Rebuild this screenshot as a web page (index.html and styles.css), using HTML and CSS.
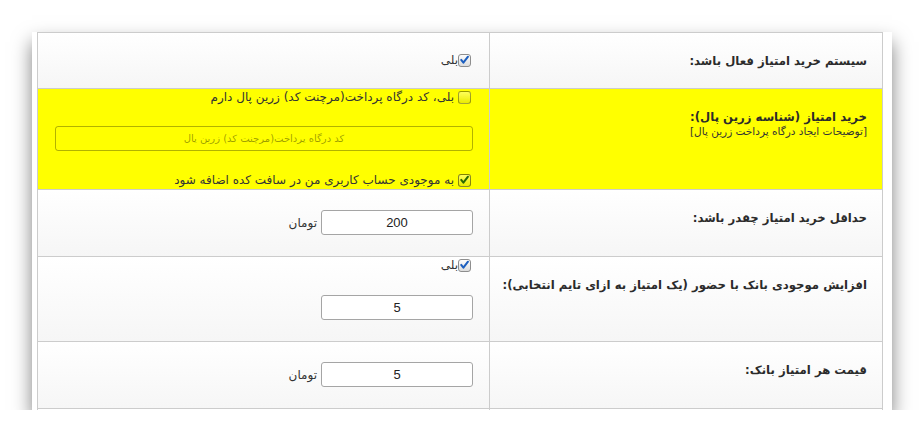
FILE: index.html
```html
<!DOCTYPE html>
<html lang="fa">
<head>
  <meta charset="utf-8">
  <title>تنظیمات خرید امتیاز</title>
  <link rel="stylesheet" href="styles.css">
</head>
<body>
  <div class="panel">
    <div class="settings" dir="rtl">

      <div class="row">
        <div class="label"><b>سیستم خرید امتیاز فعال باشد:</b></div>
        <div class="value value-top">
          <label class="check">
            <span class="box"><svg viewBox="0 0 13 13"><path d="M2.6 6.4 L5.2 9.6 L10.6 2.6"/></svg></span>بلی
          </label>
        </div>
      </div>

      <div class="row row-yellow">
        <div class="label">
          <b>خرید امتیاز (شناسه زرین پال):</b>
          <small>[توضیحات ایجاد درگاه پرداخت زرین پال]</small>
        </div>
        <div class="value value-top value-stack">
          <label class="check check-gap">
            <span class="box box-empty"></span>بلی، کد درگاه پرداخت(مرچنت کد) زرین پال دارم
          </label>
          <input class="field field-wide" type="text" placeholder="کد درگاه پرداخت(مرچنت کد) زرین پال">
          <label class="check check-gap">
            <span class="box box-green"><svg viewBox="0 0 13 13"><path d="M2.6 6.4 L5.2 9.6 L10.6 2.6"/></svg></span>به موجودی حساب کاربری من در سافت کده اضافه شود
          </label>
        </div>
      </div>

      <div class="row">
        <div class="label"><b>حداقل خرید امتیاز چقدر باشد:</b></div>
        <div class="value value-inline">
          <input class="field" type="text" value="200">
          <span class="unit">تومان</span>
        </div>
      </div>

      <div class="row">
        <div class="label"><b>افزایش موجودی بانک با حضور (یک امتیاز به ازای تایم انتخابی):</b></div>
        <div class="value value-top value-stack value-tail">
          <label class="check">
            <span class="box"><svg viewBox="0 0 13 13"><path d="M2.6 6.4 L5.2 9.6 L10.6 2.6"/></svg></span>بلی
          </label>
          <input class="field" type="text" value="5">
        </div>
      </div>

      <div class="row">
        <div class="label"><b>قیمت هر امتیاز بانک:</b></div>
        <div class="value value-inline">
          <input class="field" type="text" value="5">
          <span class="unit">تومان</span>
        </div>
      </div>

      <!-- next row, only its top edge shows inside the panel -->
      <div class="row">
        <div class="label"></div>
        <div class="value value-top">
          <span class="box"></span>
        </div>
      </div>

    </div>
  </div>
</body>
</html>
```

FILE: styles.css
```css
body { margin: 0; background: #fff; font-family: "DejaVu Sans", sans-serif; color: #333; }

.panel { margin: 32px 0 0 32px; width: 860px; height: 378px; box-sizing: border-box; padding: 0 9px 0 5px; background: #fff; overflow: hidden; box-shadow: 0 10px 18px rgba(0, 0, 0, 0.5); }

.settings { width: 846px; box-sizing: border-box; border: 1px solid #ccc; border-bottom: none; }

.row { display: grid; grid-template-columns: 393px 451px; border-bottom: 1px solid #ccc; background: linear-gradient(#fff, #f6f6f6); }
.row-yellow { background: #ffff00; }

.label { padding: 20px 15px 19px 6px; border-left: 1px solid #ccc; text-align: right; }
.label b { display: block; font-size: 11.7px; line-height: 16px; color: #2b2b2b; white-space: nowrap; }
.label small { display: block; font-size: 10.5px; line-height: 13px; color: #333; }

.value { padding: 20px 16px 21px; display: flex; }
.value-top { padding-top: 1px; padding-bottom: 2px; }
.value-stack { flex-direction: column; align-items: flex-start; gap: 22px; }
.value-tail { gap: 23px; padding-bottom: 21px; }
.value-inline { align-items: center; gap: 4px; }

.check { display: flex; align-items: center; font-size: 12px; line-height: 14px; color: #333; }
.check-gap { gap: 4px; }

.box { width: 13px; height: 13px; box-sizing: border-box; margin: 0 2px 0 0; border: 1px solid #8e8e8e; border-radius: 3px; background: linear-gradient(#fdfdfd, #dcdcdc); display: flex; align-items: center; justify-content: center; }
.box svg { width: 12px; height: 12px; }
.box path { fill: none; stroke: #1d5fbf; stroke-width: 2.4; stroke-linecap: round; stroke-linejoin: round; }
.box-empty { border-color: rgba(0, 0, 0, 0.35); background: linear-gradient(rgba(255, 255, 255, 0.35), rgba(0, 0, 0, 0.08)); }
.box-green { border-color: rgba(0, 0, 0, 0.45); background: linear-gradient(rgba(255, 255, 255, 0.35), rgba(0, 0, 0, 0.08)); }
.box-green path { stroke: #2c6a00; }

.field { width: 152px; height: 25px; box-sizing: border-box; margin: 0; padding: 0 6px; border: 1px solid #a5a5a5; border-radius: 3px; background: #fff; font-family: "Liberation Sans", Arial, sans-serif; font-size: 13px; color: #222; text-align: center; }
.field-wide { width: 418px; border-color: rgba(0, 0, 0, 0.3); background: transparent; font-family: "DejaVu Sans", sans-serif; font-size: 10px; }
.field-wide::placeholder { color: rgba(80, 80, 0, 0.55); }

.unit { font-size: 12px; color: #333; }
```
